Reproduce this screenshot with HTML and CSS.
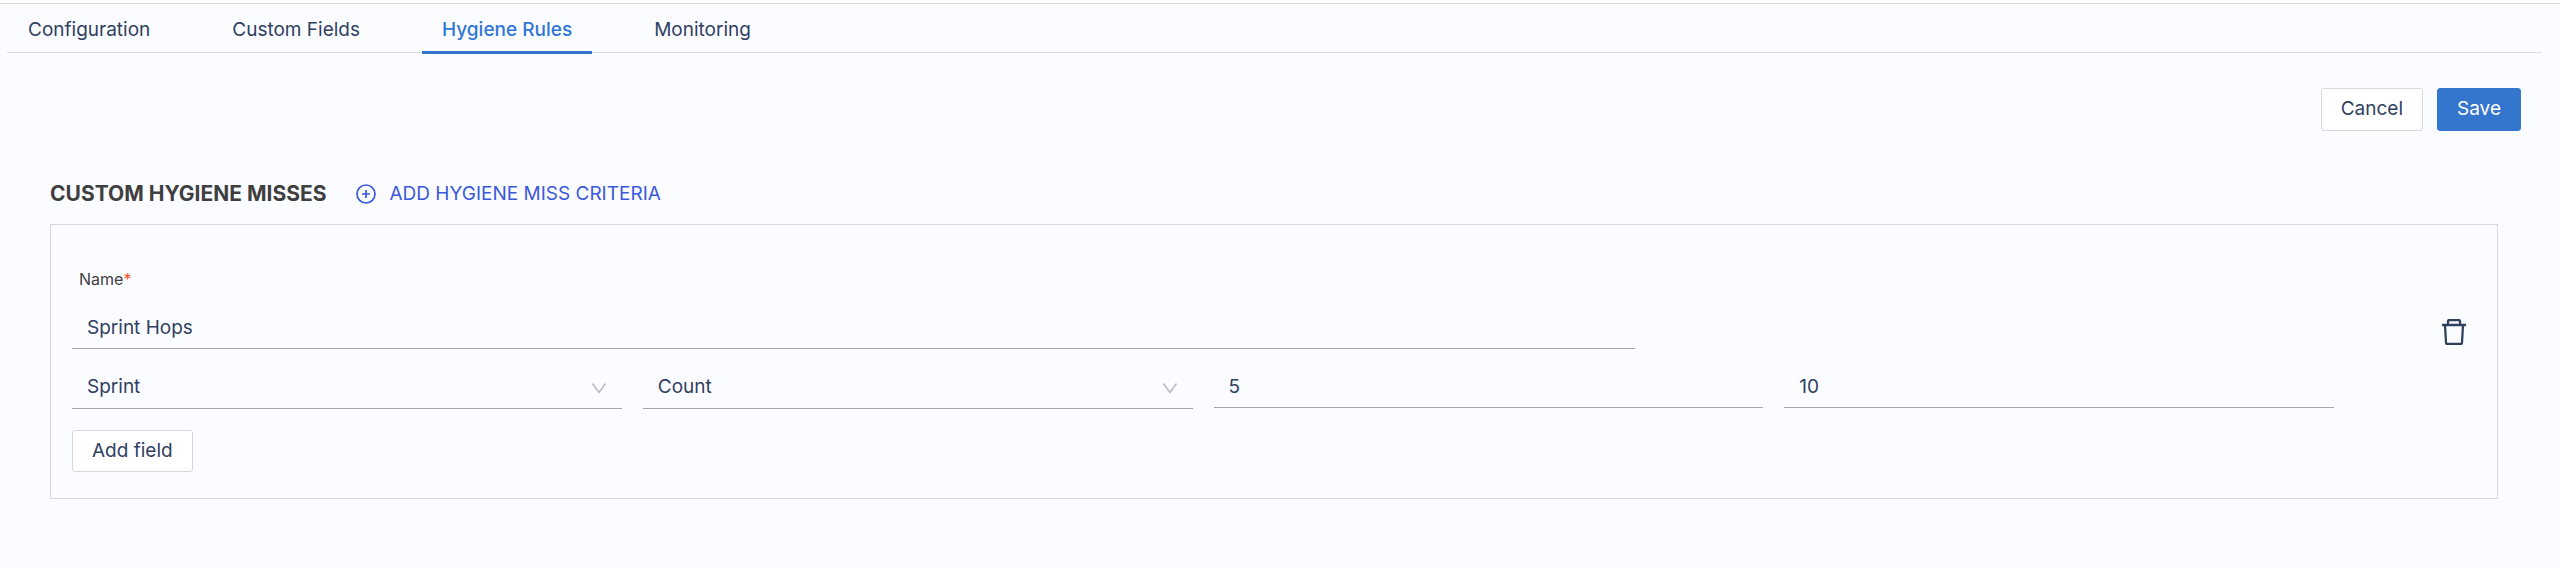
FILE: index.html
```html
<!DOCTYPE html>
<html lang="en">
<head>
<meta charset="utf-8">
<meta name="viewport" content="width=device-width, initial-scale=1">
<title>Hygiene Rules</title>
<link rel="stylesheet" href="styles.css">
</head>
<body>
<nav class="tabs" aria-label="Settings">
  <a class="tab" href="#configuration">Configuration</a>
  <a class="tab" href="#custom-fields">Custom Fields</a>
  <a class="tab tab-active" href="#hygiene-rules" aria-current="page">Hygiene Rules</a>
  <a class="tab" href="#monitoring">Monitoring</a>
</nav>
<main>
  <div class="actions">
    <button class="btn" type="button">Cancel</button>
    <button class="btn btn-primary" type="button">Save</button>
  </div>
  <section class="section">
    <header class="section-head">
      <h1 class="title">CUSTOM HYGIENE MISSES</h1>
      <button class="add-link" type="button">
        <svg class="plus-icon" viewBox="0 0 20 20" aria-hidden="true"><circle cx="10" cy="10" r="9"/><path d="M10 6v8M6 10h8"/></svg>
        ADD HYGIENE MISS CRITERIA
      </button>
    </header>
    <form class="card">
      <div class="fields">
        <label class="name-label" for="name">Name<span class="required">*</span></label>
        <input class="control name-input" id="name" type="text" value="Sprint Hops">
        <div class="criteria">
          <div class="select-wrap">
            <select class="control select" aria-label="Field"><option>Sprint</option></select>
            <svg class="chevron" viewBox="0 0 16 12" aria-hidden="true"><path d="M1.500 1.500L8 10.500L14.500 1.500"/></svg>
          </div>
          <div class="select-wrap">
            <select class="control select" aria-label="Measure"><option>Count</option></select>
            <svg class="chevron" viewBox="0 0 16 12" aria-hidden="true"><path d="M1.500 1.500L8 10.500L14.500 1.500"/></svg>
          </div>
          <input class="control" type="text" value="5" aria-label="Minimum">
          <input class="control" type="text" value="10" aria-label="Maximum">
        </div>
        <button class="btn btn-add" type="button">Add field</button>
      </div>
      <button class="delete" type="button" aria-label="Delete criteria">
        <svg class="trash-icon" viewBox="0 0 24 26" aria-hidden="true"><path d="M0 6H24M6 6V2.500Q6 1 7.500 1H16.500Q18 1 18 2.500V6M3 6L4 23.500Q4 25 5.500 25H18.500Q20 25 20 23.500L21 6"/></svg>
      </button>
    </form>
  </section>
</main>
</body>
</html>
```
FILE: styles.css
```css
* {
  box-sizing: border-box;
}

body {
  margin: 0;
  min-height: 100vh;
  border-top: 3px solid #ffffff;
  background: #fbfcff;
  color: #30405f;
  font: 19px/24px Inter, "Liberation Sans", sans-serif;
}

button,
input,
select {
  color: inherit;
  font: inherit;
}

.tabs {
  display: flex;
  gap: 42px;
  padding: 0 18px 0 8px;
  border-top: 1px solid #d9dadf;
  background: linear-gradient(#dcdde1, #dcdde1) 7px calc(100% - 1px) / calc(100% - 25px) 1px no-repeat;
}

.tab {
  padding: 14px 20px 9px;
  border-bottom: 3px solid transparent;
  color: inherit;
  text-decoration: none;
}

.tab-active {
  border-color: #3475cd;
  color: #2f76d6;
  font-weight: 500;
}

.actions {
  display: flex;
  justify-content: flex-end;
  gap: 14px;
  padding: 34px 39px 0;
}

.btn {
  height: 43px;
  padding: 0 19px 1px;
  border: 1px solid #d6d7da;
  border-radius: 3px;
  background: #ffffff;
}

.btn-primary {
  border-color: #3475cd;
  background: #3475cd;
  color: #ffffff;
}

.section {
  padding: 48px 62px 0 50px;
}

.section-head {
  display: flex;
  align-items: center;
  gap: 30px;
  min-height: 30px;
}

.title {
  margin: 0;
  color: #3f3f3f;
  font-size: 21px;
  font-weight: 700;
}

.add-link {
  display: flex;
  align-items: center;
  gap: 13px;
  padding: 0;
  border: 0;
  background: none;
  color: #3b59db;
}

.plus-icon {
  width: 20px;
  height: 20px;
  fill: none;
  stroke: currentColor;
  stroke-width: 1.7;
}

.card {
  display: flex;
  align-items: flex-start;
  gap: 108px;
  margin-top: 15px;
  padding: 40px 31px 26px 21px;
  border: 1px solid #d6d7da;
}

.fields {
  display: flex;
  flex: 1;
  flex-direction: column;
  align-items: flex-start;
  min-width: 0;
}

.name-label {
  padding: 2px 7px;
  color: #3f3f3f;
  font-size: 16px;
  line-height: 24px;
}

.required {
  color: #f5502d;
}

.control {
  width: 100%;
  height: 43px;
  padding: 0 15px;
  border: 0;
  border-bottom: 1px solid #a5a6aa;
  border-radius: 0;
  outline: 0;
  background: transparent;
}

.name-input {
  width: 69.1%;
  margin-top: 13px;
}

.criteria {
  display: grid;
  grid-template-columns: repeat(4, 1fr);
  gap: 21px;
  width: 100%;
  margin-top: 16px;
}

.select-wrap {
  position: relative;
}

.select {
  display: block;
  height: 44px;
  appearance: none;
}

.chevron {
  position: absolute;
  top: 17px;
  right: 15px;
  width: 16px;
  height: 12px;
  fill: none;
  stroke: #b9bac0;
  stroke-width: 1.5;
  pointer-events: none;
}

.btn-add {
  height: 42px;
  margin-top: 21px;
}

.delete {
  margin-top: 54px;
  padding: 0;
  border: 0;
  background: none;
}

.trash-icon {
  display: block;
  width: 24px;
  height: 26px;
  fill: none;
  stroke: #30405f;
  stroke-width: 2.3;
}
```
